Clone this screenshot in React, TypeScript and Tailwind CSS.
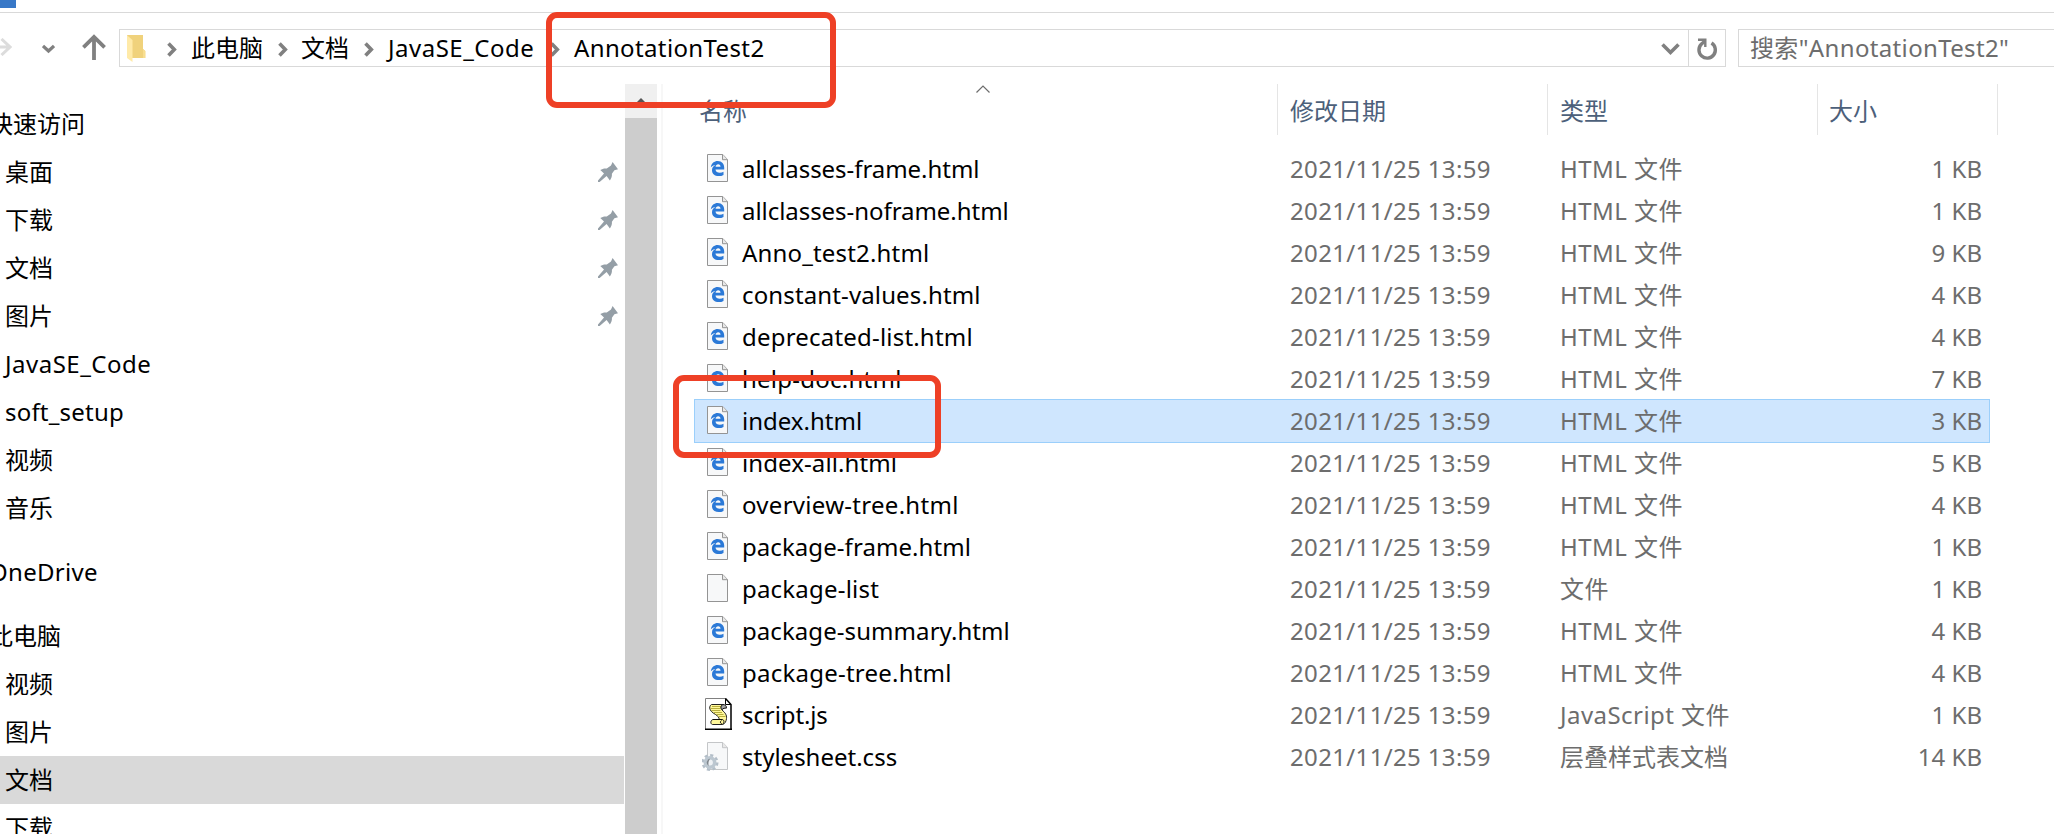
type FileKind = "html" | "blank" | "script" | "css";

interface FileEntry {
  name: string;
  kind: FileKind;
  type: string;
  size: string;
  tracking: string;
  selected?: boolean;
}

const FILES: FileEntry[] = [
  { name: "allclasses-frame.html", kind: "html", type: "HTML 文件", size: "1 KB", tracking: "tracking-[-0.05px]" },
  { name: "allclasses-noframe.html", kind: "html", type: "HTML 文件", size: "1 KB", tracking: "tracking-[-0.05px]" },
  { name: "Anno_test2.html", kind: "html", type: "HTML 文件", size: "9 KB", tracking: "tracking-[0.17px]" },
  { name: "constant-values.html", kind: "html", type: "HTML 文件", size: "4 KB", tracking: "tracking-[0.13px]" },
  { name: "deprecated-list.html", kind: "html", type: "HTML 文件", size: "4 KB", tracking: "tracking-[0.2px]" },
  { name: "help-doc.html", kind: "html", type: "HTML 文件", size: "7 KB", tracking: "tracking-[0.25px]" },
  { name: "index.html", kind: "html", type: "HTML 文件", size: "3 KB", tracking: "tracking-normal", selected: true },
  { name: "index-all.html", kind: "html", type: "HTML 文件", size: "5 KB", tracking: "tracking-[0.1px]" },
  { name: "overview-tree.html", kind: "html", type: "HTML 文件", size: "4 KB", tracking: "tracking-[0.29px]" },
  { name: "package-frame.html", kind: "html", type: "HTML 文件", size: "1 KB", tracking: "tracking-[0.07px]" },
  { name: "package-list", kind: "blank", type: "文件", size: "1 KB", tracking: "tracking-[0.2px]" },
  { name: "package-summary.html", kind: "html", type: "HTML 文件", size: "4 KB", tracking: "tracking-[0.07px]" },
  { name: "package-tree.html", kind: "html", type: "HTML 文件", size: "4 KB", tracking: "tracking-[0.23px]" },
  { name: "script.js", kind: "script", type: "JavaScript 文件", size: "1 KB", tracking: "tracking-[-0.1px]" },
  { name: "stylesheet.css", kind: "css", type: "层叠样式表文档", size: "14 KB", tracking: "tracking-normal" },
];

interface NavItem {
  label: string;
  root?: boolean;
  pinned?: boolean;
  selected?: boolean;
  tracking?: string;
}

const NAV_GROUPS: NavItem[][] = [
  [
    { label: "快速访问", root: true },
    { label: "桌面", pinned: true },
    { label: "下载", pinned: true },
    { label: "文档", pinned: true },
    { label: "图片", pinned: true },
    { label: "JavaSE_Code", tracking: "tracking-[0.5px]" },
    { label: "soft_setup", tracking: "tracking-[0.2px]" },
    { label: "视频" },
    { label: "音乐" },
  ],
  [{ label: "OneDrive", root: true, tracking: "tracking-[0.3px]" }],
  [
    { label: "此电脑", root: true },
    { label: "视频" },
    { label: "图片" },
    { label: "文档", selected: true },
    { label: "下载" },
  ],
];

function Crumb() {
  return (
    <svg className="w-[10px] h-[15px] mt-[2px] shrink-0" viewBox="0 0 10 15" fill="none" stroke="#808080" strokeWidth="3.6">
      <path d="M1.500 1.500 7.300 7.500l-5.800 6" />
    </svg>
  );
}

function PinIcon() {
  return (
    <svg className="w-5 h-5 shrink-0" viewBox="0 0 20 20" fill="#949ea6">
      <path d="M14.6 0 20 7.3l-3.6 1-2.5 3.5c.3 2.3-.5 4.6-2 6.6L8.6 14 1.6 20H0v-1.6l6-7L2.3 8.1c2-1.4 4.2-2 6.5-1.6L13 3.6z" />
    </svg>
  );
}

function Page({ fold = "#949494" }: { fold?: string }) {
  return (
    <>
      <path d="M.5.5h15.3l4.7 5v22H.5z" fill="#f7f8f9" stroke={fold} />
      <path d="M15.5.5v5.200h5" fill="#e8e8e8" stroke={fold} />
    </>
  );
}

function FileIcon({ kind }: { kind: FileKind }) {
  if (kind === "script") {
    return (
      <svg className="w-[27px] h-8 -ml-[2px] -mr-1 shrink-0" viewBox="0 0 27 32" fill="none">
        <path d="M.5.5h20l5.5 6v24.9H.5z" fill="#fff" />
        <path d="M.5 31V.5h20" stroke="#808080" />
        <path d="M20.500.500v6H26" stroke="#000" />
        <path d="M20.500.500 26 6.500V31M0 31.200h27" stroke="#000" strokeWidth="1.500" />
        <path
          d="M6.500 6.500H18c-2 1-2.500 3.500-1 5.500 3 2.500 5 5 4.500 8.500-.3 2.800-1.500 5.500-4 6H7.500C5 26 5.500 22 8 21.500h6c.5-2-1-3.200-3.500-5C7 14.500 5 12.500 4.700 10c0-1.600.6-2.900 1.800-3.500z"
          fill="#fff79a"
          stroke="#222"
          strokeWidth="1"
        />
        <path d="M7 8.500h9M6 10.500h9M6.500 12.500h9M9 14.500h8M11.500 16.500h7M13.500 18.500h7" stroke="#b0a632" strokeWidth="0.9" />
        <path d="M18 6.500c-2.500 1-2.500 4-1 5.200 1-1.500 3-1.700 4.300-1.500.8-2-1.300-3.700-3.300-3.700z" fill="#a8a8a8" stroke="#111" />
        <path d="M8 21.500h9c2.500 0 2.500 3.500.5 4.800M16.500 22.500c-1.500 1-1.500 2.500.2 3.200" stroke="#111" />
      </svg>
    );
  }
  if (kind === "css") {
    return (
      <svg className="w-[26px] h-[30px] -ml-[5px] mt-[2px] shrink-0" viewBox="0 0 26 30">
        <g transform="translate(5 0)">
          <Page fold="#c4c6c8" />
        </g>
        <circle cx="8" cy="20.500" r="7.200" fill="none" stroke="#b3bec8" strokeWidth="2.600" strokeDasharray="3.050 2.600" />
        <circle cx="8" cy="20.500" r="4.700" fill="#eef1f4" stroke="#bcc7d0" strokeWidth="3.600" />
        <path d="M8.300 16.600a3.900 3.900 0 0 0-1.500 7.300c-.8-2.500-.3-5 1.500-7.300z" fill="#7f868c" />
      </svg>
    );
  }
  return (
    <svg className="w-[21px] h-7 shrink-0" viewBox="0 0 21 28">
      <Page />
      {kind === "html" && (
        <path
          d="M3.800 13.300C4.500 9.200 7.200 7 10.700 7c4.300 0 6.500 3 6.500 6.400v2.100H8.500c.2 2.300 2 3.200 4.300 3.200 1.400 0 2.600-.4 3.700-1v3.200c-1.300.8-2.900 1.200-4.700 1.200-4.100 0-6.800-2.200-6.800-5.800 0-2.400 1.300-4.200 3.400-5.200-1.800.2-3.300 1-4.600 2.200zm4.800-.5h4.900c0-1.700-.8-2.600-2.300-2.600-1.400 0-2.400 1-2.600 2.600z"
          fill="#2b79d7"
        />
      )}
    </svg>
  );
}

function AddressBar() {
  return (
    <div className="flex items-center h-[38px] mt-4">
      {/* Navigation arrows */}
      <div className="w-[119px] h-full shrink-0 flex items-center">
        <svg className="w-3 h-[18px] -mt-[2px]" viewBox="0 0 12 18" fill="none" stroke="#dcdcdc" strokeWidth="3">
          <path d="M0 9h10M1.500 1 10 9l-8.500 8" />
        </svg>
        <svg className="w-[13px] h-[10px] ml-[30px] mt-[2px]" viewBox="0 0 13 10" fill="none" stroke="#808080" strokeWidth="3.200">
          <path d="M1 2l5.500 5L12 2" />
        </svg>
        <svg className="w-6 h-[26px] ml-[27px] -mt-[2px]" viewBox="0 0 24 26" fill="none" stroke="#808080" strokeWidth="3.800">
          <path d="M12 3v23M1.400 13.300 12 3l10.600 10.300" />
        </svg>
      </div>

      {/* Path */}
      <div className="w-[1607px] h-full shrink-0 flex items-center border border-[#d9d9d9] text-black">
        <svg className="w-[19px] h-7 ml-[7px] shrink-0" viewBox="0 0 19 28">
          <path d="M0 1h16v14l2.300 2v7H5z" fill="#f0d27c" />
          <path d="M16 15l2.300 2v7H16z" fill="#f8de90" />
          <path d="M0 1.200 5.500 6v22L0 24z" fill="#ffeaa8" />
        </svg>
        <div className="ml-[21px] flex items-center">
          <Crumb />
          <span className="ml-[14px] w-[87px]">此电脑</span>
          <Crumb />
          <span className="ml-[13px] w-[63px]">文档</span>
          <Crumb />
          <span className="ml-[14px] w-[162px] tracking-[0.5px]">JavaSE_Code</span>
          <Crumb />
          <span className="ml-[14px] tracking-[0.37px]">AnnotationTest2</span>
        </div>
        <svg className="w-[19px] h-[14px] ml-auto mr-2 mt-[2px]" viewBox="0 0 19 14" fill="none" stroke="#808080" strokeWidth="3.600">
          <path d="M1.500 2.500l8 8 8-8" />
        </svg>
        <div className="w-[37px] h-full flex items-center justify-center border-l border-[#d9d9d9]">
          <svg className="w-[22px] h-6 mt-1" viewBox="0 0 22 24" fill="none" stroke="#808080" strokeWidth="3.400">
            <path d="M15.500 5A8.200 8.200 0 1 1 5.500 6L9 3" />
            <path d="M2 1.700h7.300V9" strokeWidth="2.400" />
          </svg>
        </div>
      </div>

      {/* Search */}
      <div className="ml-3 grow h-full flex items-center pl-[11px] border border-r-0 border-[#d9d9d9] text-[#6d6d6d] tracking-[0.35px]">
        搜索"AnnotationTest2"
      </div>
    </div>
  );
}

function Sidebar() {
  return (
    <div className="w-[624px] shrink-0 pt-4 overflow-hidden flex flex-col gap-4">
      {NAV_GROUPS.map((group, idx) => (
        <div key={idx}>
          {group.map((item) => (
            <div
              key={item.label}
              className={`h-12 flex items-center justify-between pr-[6px] ${item.root ? "" : "pl-[5px]"} ${
                item.selected ? "bg-[#d9d9d9]" : ""
              }`}
            >
              <span className={`${item.root ? "-ml-[11px]" : ""} ${item.tracking ?? ""}`}>{item.label}</span>
              {item.pinned && <PinIcon />}
            </div>
          ))}
        </div>
      ))}
    </div>
  );
}

function FileList() {
  return (
    <div className="grow">
      {/* Column headings */}
      <div className="h-[51px] flex text-[#4c607a]">
        <div className="w-[615px] pl-[36px] pt-[2px] flex items-center border-r border-[#e5e5e5]">
          <span className="w-[277px]">名称</span>
          <svg className="w-[14px] h-2 mb-[44px]" viewBox="0 0 14 8" fill="none" stroke="#6d6d6d" strokeWidth="1.200">
            <path d="M.5 7.500 7 1l6.500 6.500" />
          </svg>
        </div>
        <div className="w-[270px] pl-3 pt-[2px] flex items-center border-r border-[#e5e5e5]">修改日期</div>
        <div className="w-[270px] pl-3 pt-[2px] flex items-center border-r border-[#e5e5e5]">类型</div>
        <div className="w-[180px] pl-[11px] pt-[2px] flex items-center border-r border-[#e5e5e5]">大小</div>
      </div>

      <div className="pt-[13px] pl-[31px]">
        {FILES.map((file) => (
          <div
            key={file.name}
            className={`w-[1296px] h-11 -mb-[2px] first:-mt-px pl-3 pr-[7px] flex items-center border text-[#6d6d6d] ${
              file.selected ? "bg-[#cfe6fe] border-[#9bcffb]" : "border-transparent"
            }`}
          >
            <div className="w-[35px] -mt-[2px] shrink-0 flex items-center">
              <FileIcon kind={file.kind} />
            </div>
            <span className={`w-[548px] shrink-0 text-black ${file.tracking}`}>{file.name}</span>
            <span className="w-[270px] shrink-0 tracking-[0.35px]">2021/11/25 13:59</span>
            <span className={`grow ${file.kind === "css" ? "" : "tracking-[0.45px]"}`}>{file.type}</span>
            <span className="shrink-0">{file.size}</span>
          </div>
        ))}
      </div>
    </div>
  );
}

export default function App() {
  return (
    <div className="relative w-[2054px] h-[834px] overflow-hidden bg-white text-black font-['Noto_Sans','Noto_Sans_CJK_SC',sans-serif] text-[24px] leading-none whitespace-nowrap">
      <div className="h-[13px] border-b border-[#d9d9d9]">
        <div className="w-4 h-2 bg-[#3878c7]" />
      </div>
      <AddressBar />
      <div className="mt-[17px] h-[750px] flex">
        <Sidebar />
        {/* Scrollbar */}
        <div className="w-8 ml-px shrink-0 flex flex-col bg-[#f0f0f0]">
          <div className="h-[34px] flex justify-center pt-[14px]">
            <svg className="w-[10px] h-[6px]" viewBox="0 0 10 6" fill="#555">
              <path d="M5 0l5 5v1H0V5z" />
            </svg>
          </div>
          <div className="grow bg-[#cdcdcd]" />
        </div>
        <div className="w-[2px] ml-1 shrink-0 bg-[#f7f7f7]" />
        <FileList />
      </div>

      {/* Highlight marks */}
      <div className="absolute left-[546px] top-[12px] w-[290px] h-[96px] rounded-[11px] border-6 border-[#ee4026]" />
      <div className="absolute left-[673px] top-[375px] w-[268px] h-[83px] rounded-[11px] border-6 border-[#ee4026]" />
    </div>
  );
}
